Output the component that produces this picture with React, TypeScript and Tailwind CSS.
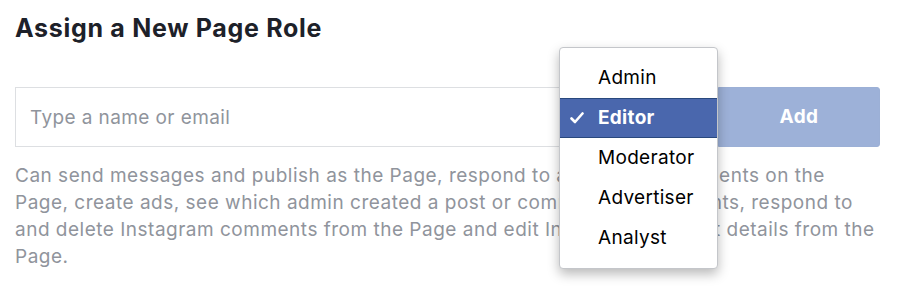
import { useState } from 'react'

const roles = ['Admin', 'Editor', 'Moderator', 'Advertiser', 'Analyst']

const descLines = [
  'Can send messages and publish as the Page, respond to and delete comments on the',
  'Page, create ads, see which admin created a post or comment, view insights, respond to',
  'and delete Instagram comments from the Page and edit Instagram account details from the',
  'Page.',
]

function Check() {
  return (
    <svg width="14" height="12" viewBox="0 0 14 12" className="shrink-0">
      <path d="M1.5 6.5 L5 10 L12.5 1.5" fill="none" stroke="white" strokeWidth="2.6" strokeLinecap="round" strokeLinejoin="round" />
    </svg>
  )
}

export default function App() {
  const [selected] = useState('Editor')

  return (
    <div className="h-[297px] w-[899px] bg-white pl-[15px] pt-[13px] font-['Inter','Helvetica_Neue',sans-serif]">
      <h1 className="text-[25px] leading-[30px] font-bold tracking-[0.7px] text-[#1d2129]">Assign a New Page Role</h1>

      <div className="relative mt-[44px] flex h-[60px] w-[865px]">
        <input
          type="text"
          placeholder="Type a name or email"
          className="h-full flex-1 border border-[#dddfe2] bg-white px-[14px] text-[19px] tracking-[0.4px] text-[#1d2129] outline-none placeholder:text-[#90949c]"
        />
        <button className="h-full w-[162px] rounded-r-[3px] border border-[#9cb0d6] bg-[#9db1d8] text-[19px] font-bold tracking-[0.4px] text-white">
          Add
        </button>

        <div className="absolute left-[544px] top-[-40px] w-[159px] rounded-[4px] border border-[#c4c6ca] bg-white py-[10px] shadow-[0_5px_12px_rgba(0,0,0,0.28)]">
          {roles.map((r) =>
            r === selected ? (
              <div
                key={r}
                className="flex h-[40px] items-center border-y border-[#29487d] bg-[#4a67ad] pl-[10px] text-[19px] font-bold tracking-[0.3px] text-white"
              >
                <Check />
                <span className="ml-[14px]">{r}</span>
              </div>
            ) : (
              <div key={r} className="flex h-[40px] items-center pl-[38px] text-[19px] tracking-[0.3px] text-black">
                {r}
              </div>
            ),
          )}
        </div>
      </div>

      <p className="mt-[15px] text-[19px] leading-[27px] tracking-[0.5px] text-[#90949c]">
        {descLines.map((l) => (
          <span key={l} className="block whitespace-nowrap">
            {l}
          </span>
        ))}
      </p>
    </div>
  )
}
